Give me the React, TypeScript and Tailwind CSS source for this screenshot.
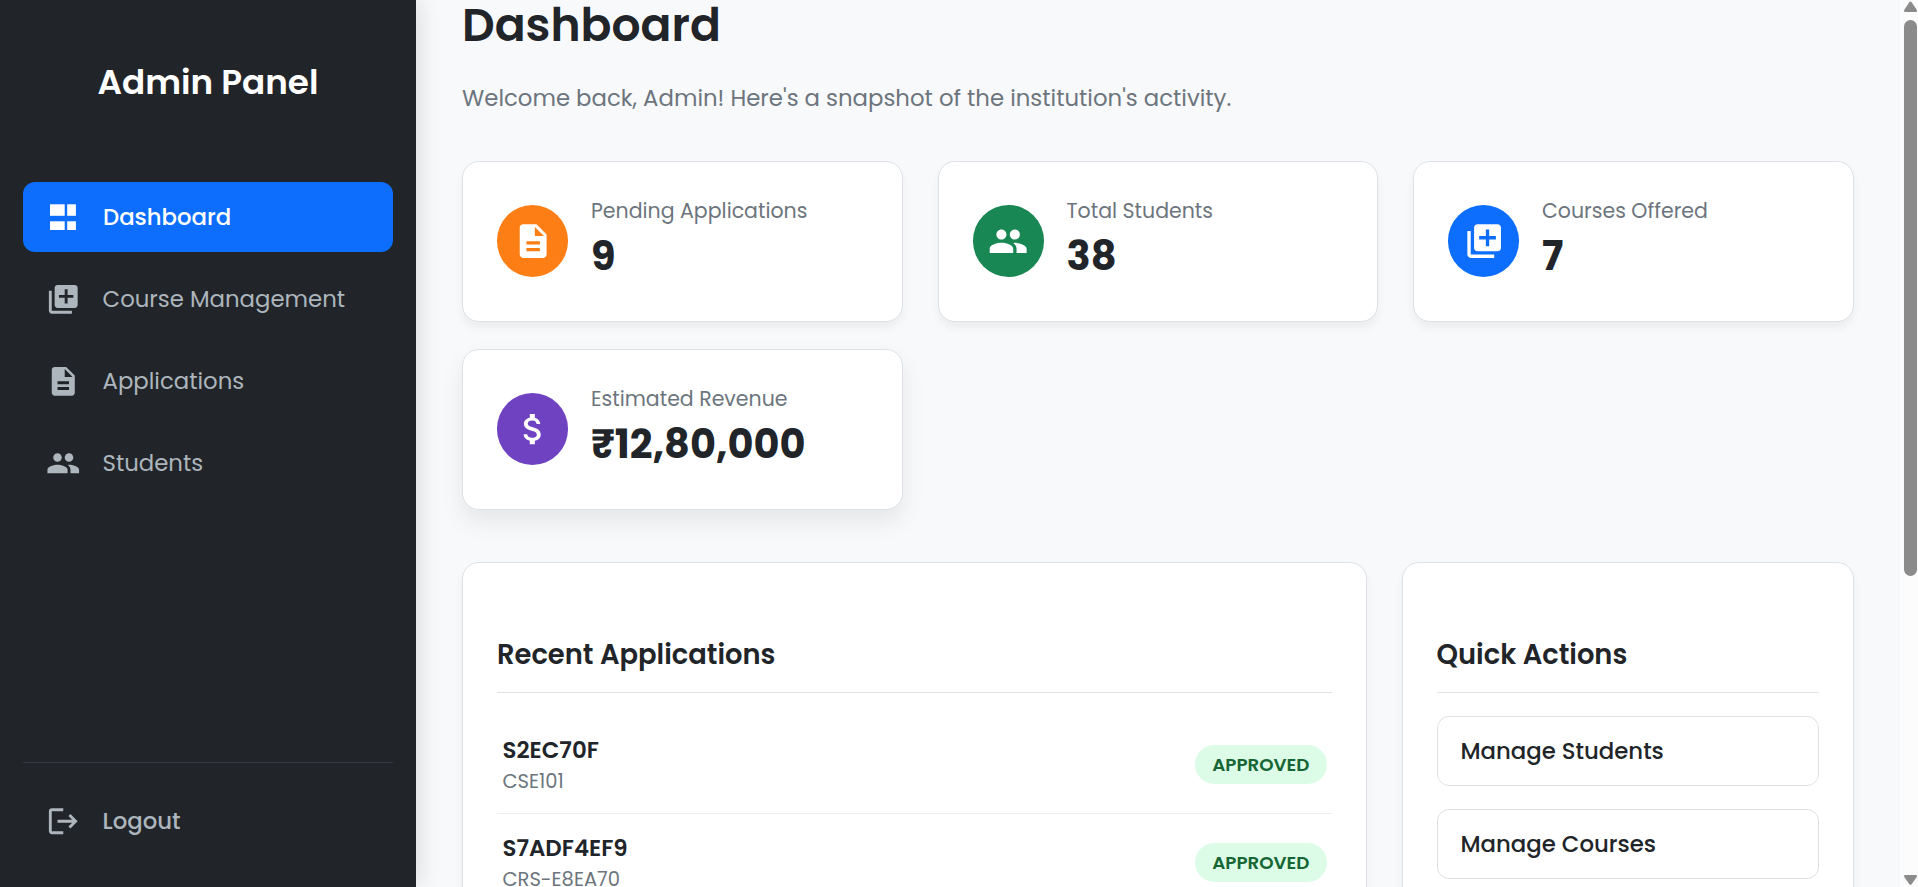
import type { ReactNode } from "react";
import { MdLibraryAdd, MdDescription, MdPeople, MdLogout, MdAttachMoney } from "react-icons/md";

function DashboardIcon() {
  return (
    <svg className="size-[35px]" viewBox="0 0 35 35" fill="currentColor">
      <rect x="4" y="4.3" width="14.7" height="11.5" />
      <rect x="21.2" y="4.3" width="8.7" height="11.5" />
      <rect x="4" y="21.3" width="14.7" height="8.7" />
      <rect x="21.2" y="21.3" width="8.7" height="8.7" />
    </svg>
  );
}

type NavItemProps = { icon: ReactNode; label: string; active?: boolean; medium?: boolean };

function NavItem({ icon, label, active, medium }: NavItemProps) {
  const tone = active ? "bg-[#0d6efd] text-white font-medium" : "text-[#adb5bd]";
  return (
    <a
      className={`flex h-[70px] items-center gap-[22px] rounded-[12px] pl-[23px] text-[22.8px] ${tone} ${medium ? "font-medium" : ""}`}
    >
      <span className="shrink-0 text-[34.56px]">{icon}</span>
      <span className="whitespace-nowrap">{label}</span>
    </a>
  );
}

function Sidebar() {
  return (
    <aside className="z-10 flex w-[416px] shrink-0 flex-col bg-[#212529] px-[23px] shadow-[3px_0_22px_rgba(0,0,0,0.12)]">
      <h2 className="mt-[56px] text-center text-[34.2px] leading-[52px] font-semibold text-white">Admin Panel</h2>
      <nav className="mt-[74px] flex flex-col gap-[12px]">
        <NavItem active icon={<DashboardIcon />} label="Dashboard" />
        <NavItem icon={<MdLibraryAdd />} label="Course Management" />
        <NavItem icon={<MdDescription />} label="Applications" />
        <NavItem icon={<MdPeople />} label="Students" />
      </nav>
      <div className="mt-auto border-t border-[#343a40] pt-[23px] pb-[31px]">
        <NavItem medium icon={<MdLogout />} label="Logout" />
      </div>
    </aside>
  );
}

type StatProps = { icon: ReactNode; color: string; label: string; value: string; raised?: boolean };

function StatCard({ icon, color, label, value, raised }: StatProps) {
  const lift = raised
    ? "-translate-y-[7px] shadow-[0_12px_24px_rgba(0,0,0,0.08)]"
    : "shadow-[0_6px_10px_rgba(0,0,0,0.05)]";
  return (
    <div className={`flex h-[161px] items-center gap-[23px] rounded-[17px] border border-[#dee2e6] bg-white px-[34px] pb-[1px] ${lift}`}>
      <div className={`flex h-[72px] w-[71px] shrink-0 items-center justify-center rounded-full pl-[1px] text-[40.32px] text-white ${color}`}>
        {icon}
      </div>
      <div className="pb-[1px] whitespace-nowrap">
        <p className="text-[20.5px] leading-[31px] text-[#6c757d]">{label}</p>
        <p className="text-[39.9px] leading-[60px] font-bold text-[#212529]">{value}</p>
      </div>
    </div>
  );
}

function Panel({ title, children }: { title: string; children: ReactNode }) {
  return (
    <section className="h-[600px] rounded-[17px] border border-[#dee2e6] bg-white px-[34px] pt-[71px] shadow-[0_6px_10px_rgba(0,0,0,0.05)]">
      <h3 className="mb-[23px] border-b border-[#dee2e6] pb-[16px] text-[27.35px] leading-[42px] font-semibold">{title}</h3>
      {children}
    </section>
  );
}

function ApplicationRow({ id, course }: { id: string; course: string }) {
  return (
    <li className="flex h-[98px] items-center justify-between border-b border-[#eceef0] pr-[5px] pl-[5.5px]">
      <div>
        <p className="text-[22.9px] leading-[34px] font-semibold">{id}</p>
        <p className="text-[19.5px] leading-[29px] text-[#6c757d]">{course}</p>
      </div>
      <span className="flex h-[39px] items-center rounded-full bg-[#dcfce7] px-[17.5px] text-[18.3px] font-semibold text-[#166534]">
        APPROVED
      </span>
    </li>
  );
}

function ActionButton({ label }: { label: string }) {
  return (
    <button className="flex h-[70px] items-center rounded-[12px] border border-[#dee2e6] px-[23px] text-[22.8px] font-medium">
      {label}
    </button>
  );
}

function Scrollbar() {
  return (
    <div className="flex w-[18px] shrink-0 flex-col items-end bg-[#fcfcfc] pt-[1px] pr-[1px] pb-[2px]">
      <svg className="h-[11px] w-[13px]" viewBox="0 0 13 11" fill="#8b8b8b">
        <path d="M5.4 1.2Q6.5 0 7.6 1.2L12.7 8.8Q13.4 10.8 12 11H1Q-.4 10.8 .3 8.8Z" />
      </svg>
      <div className="mt-[8px] h-[556px] w-[13px] rounded-full bg-[#8b8b8b]" />
      <svg className="mt-auto h-[10px] w-[13px]" viewBox="0 0 13 10" fill="#8b8b8b">
        <path d="M5.4 9.2Q6.5 10.4 7.6 9.2L12.7 2Q13.4 .2 12 0H1Q-.4 .2 .3 2Z" />
      </svg>
    </div>
  );
}

export default function App() {
  return (
    <div className="flex h-[887px] w-full overflow-hidden bg-[#f8f9fb] font-['Poppins','Open_Sans',sans-serif] text-[#212529]">
      <Sidebar />
      <main className="min-w-0 flex-1 overflow-hidden px-[46px]">
        <h1 className="text-[45.6px] leading-[50px] font-semibold">Dashboard</h1>
        <p className="mt-[31px] mb-[46px] text-[22.8px] leading-[34px] text-[#6c757d]">
          Welcome back, Admin! Here's a snapshot of the institution's activity.
        </p>
        <div className="grid grid-cols-3 gap-x-[34.56px] gap-y-[34px]">
          <StatCard icon={<MdDescription />} color="bg-[#fd7e14]" label="Pending Applications" value="9" />
          <StatCard icon={<MdPeople />} color="bg-[#198754]" label="Total Students" value="38" />
          <StatCard icon={<MdLibraryAdd />} color="bg-[#0d6efd]" label="Courses Offered" value="7" />
          <StatCard raised icon={<MdAttachMoney />} color="bg-[#6f42c1]" label="Estimated Revenue" value="₹12,80,000" />
        </div>
        <div className="mt-[45px] grid grid-cols-[2fr_1fr] gap-[34.56px]">
          <Panel title="Recent Applications">
            <ul>
              <ApplicationRow id="S2EC70F" course="CSE101" />
              <ApplicationRow id="S7ADF4EF9" course="CRS-E8EA70" />
            </ul>
          </Panel>
          <Panel title="Quick Actions">
            <div className="flex flex-col gap-[23px]">
              <ActionButton label="Manage Students" />
              <ActionButton label="Manage Courses" />
            </div>
          </Panel>
        </div>
      </main>
      <Scrollbar />
    </div>
  );
}
